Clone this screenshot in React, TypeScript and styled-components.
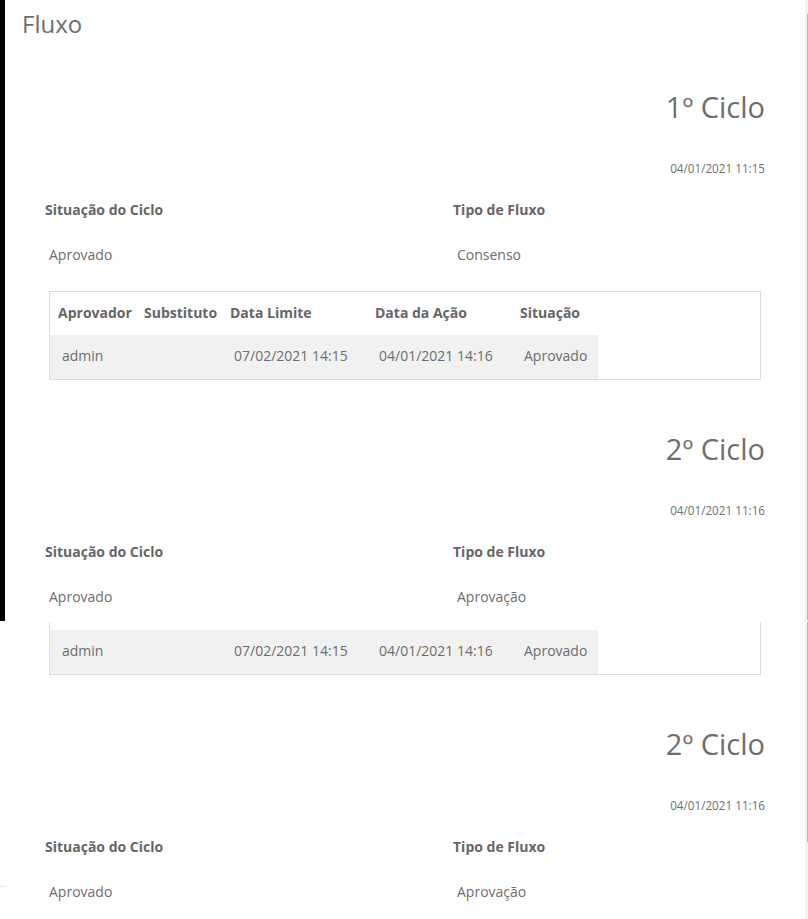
import React from "react";
import styled, { createGlobalStyle } from "styled-components";

const Global = createGlobalStyle`
  html, body { margin: 0; padding: 0; background: #fff; }
  body { font-family: "Open Sans", "Noto Sans", sans-serif; color: #6d6d6d; }
  * { box-sizing: border-box; }
`;

const Page = styled.div`
  display: flex;
  width: 808px;
  height: 919px;
  overflow: hidden;
`;

const LeftRail = styled.div`
  width: 5px;
  flex: none;
  display: flex;
  flex-direction: column;
`;

const RailBlack = styled.div`
  height: 621px;
  background: #000;
`;

const RailTick = styled.div`
  margin-top: 265px;
  height: 1px;
  background: #e6e6e6;
`;

const Main = styled.main`
  flex: 1;
  min-width: 0;
`;

const ScrollTrack = styled.div`
  width: 3px;
  flex: none;
  background: #f1f1f1;
  display: flex;
  flex-direction: column;
  align-items: flex-end;
`;

const Thumb = styled.div<{ $top: number; $h: number }>`
  margin-top: ${(p) => p.$top}px;
  width: 1px;
  height: ${(p) => p.$h}px;
  background: #b9b9b9;
`;

const Heading = styled.h1`
  margin: 0;
  padding-left: 17px;
  height: 48px;
  line-height: 48px;
  font-size: 24px;
  font-weight: 400;
  color: #6e6e6e;
`;

const Cycle = styled.section`
  padding: 0 40px 10px;
`;

const CycleTitle = styled.h2`
  margin: 39px 0 0;
  text-align: right;
  height: 40px;
  line-height: 40px;
  font-size: 29px;
  font-weight: 400;
  color: #6e6e6e;
`;

const CycleDate = styled.div`
  margin-top: 31px;
  text-align: right;
  height: 20px;
  line-height: 20px;
  font-size: 11.7px;
  color: #707070;
`;

const Info = styled.div`
  display: grid;
  grid-template-columns: 408px 1fr;
`;

const Field = styled.div`
  display: flex;
  flex-direction: column;
`;

const Label = styled.div`
  margin-top: 22px;
  height: 20px;
  line-height: 19px;
  font-size: 14px;
  font-weight: 700;
  color: #666;
`;

const Value = styled.div`
  margin-top: 25px;
  padding-left: 4px;
  height: 20px;
  line-height: 19px;
  font-size: 14px;
  color: #6d6d6d;
`;

const TableBox = styled.div<{ $cut?: boolean }>`
  margin: ${(p) => (p.$cut ? "15px 4px 0" : "26px 4px 0")};
  border: 1px solid #dcdcdc;
  border-top: ${(p) => (p.$cut ? "none" : "1px solid #dcdcdc")};
  padding-top: ${(p) => (p.$cut ? "8px" : "0")};
`;

const Table = styled.table`
  border-collapse: collapse;
  font-size: 14px;
  line-height: 18px;
`;

const Th = styled.th<{ $w: number }>`
  width: ${(p) => p.$w}px;
  height: 43px;
  padding: 0 0 2px 8px;
  text-align: left;
  font-weight: 700;
  color: #666;
  white-space: nowrap;
`;

const Tr = styled.tr`
  background: #f1f1f1;
`;

const Td = styled.td<{ $w: number }>`
  width: ${(p) => p.$w}px;
  height: 44px;
  padding: 0 0 2px 12px;
  color: #6d6d6d;
  white-space: nowrap;
`;

type Row = { aprovador: string; substituto: string; limite: string; acao: string; situacao: string };

const widths = [86, 86, 145, 145, 86];
const headers = ["Aprovador", "Substituto", "Data Limite", "Data da Ação", "Situação"];

const ApprovalTable: React.FC<{ rows: Row[]; cut?: boolean }> = ({ rows, cut }) => (
  <TableBox $cut={cut}>
    <Table>
      {!cut && (
        <thead>
          <tr>
            {headers.map((h, i) => (
              <Th key={h} $w={widths[i]}>{h}</Th>
            ))}
          </tr>
        </thead>
      )}
      <tbody>
        {rows.map((r, i) => (
          <Tr key={i}>
            <Td $w={widths[0]}>{r.aprovador}</Td>
            <Td $w={widths[1]}>{r.substituto}</Td>
            <Td $w={widths[2]}>{r.limite}</Td>
            <Td $w={widths[3]}>{r.acao}</Td>
            <Td $w={widths[4]}>{r.situacao}</Td>
          </Tr>
        ))}
      </tbody>
    </Table>
  </TableBox>
);

type CycleData = {
  title: string;
  date: string;
  situacao: string;
  tipo: string;
  rows?: Row[];
  cut?: boolean;
};

const row: Row = {
  aprovador: "admin",
  substituto: "",
  limite: "07/02/2021 14:15",
  acao: "04/01/2021 14:16",
  situacao: "Aprovado",
};

const cycles: CycleData[] = [
  { title: "1º Ciclo", date: "04/01/2021 11:15", situacao: "Aprovado", tipo: "Consenso", rows: [row] },
  { title: "2º Ciclo", date: "04/01/2021 11:16", situacao: "Aprovado", tipo: "Aprovação", rows: [row], cut: true },
  { title: "2º Ciclo", date: "04/01/2021 11:16", situacao: "Aprovado", tipo: "Aprovação" },
];

export default function App() {
  return (
    <>
      <Global />
      <Page>
        <LeftRail>
          <RailBlack />
          <RailTick />
        </LeftRail>
        <Main>
          <Heading>Fluxo</Heading>
          {cycles.map((c, i) => (
            <Cycle key={i}>
              <CycleTitle>{c.title}</CycleTitle>
              <CycleDate>{c.date}</CycleDate>
              <Info>
                <Field>
                  <Label>Situação do Ciclo</Label>
                  <Value>{c.situacao}</Value>
                </Field>
                <Field>
                  <Label>Tipo de Fluxo</Label>
                  <Value>{c.tipo}</Value>
                </Field>
              </Info>
              {c.rows && <ApprovalTable rows={c.rows} cut={c.cut} />}
            </Cycle>
          ))}
        </Main>
        <ScrollTrack>
          <Thumb $top={14} $h={606} />
          <Thumb $top={2} $h={220} />
        </ScrollTrack>
      </Page>
    </>
  );
}
